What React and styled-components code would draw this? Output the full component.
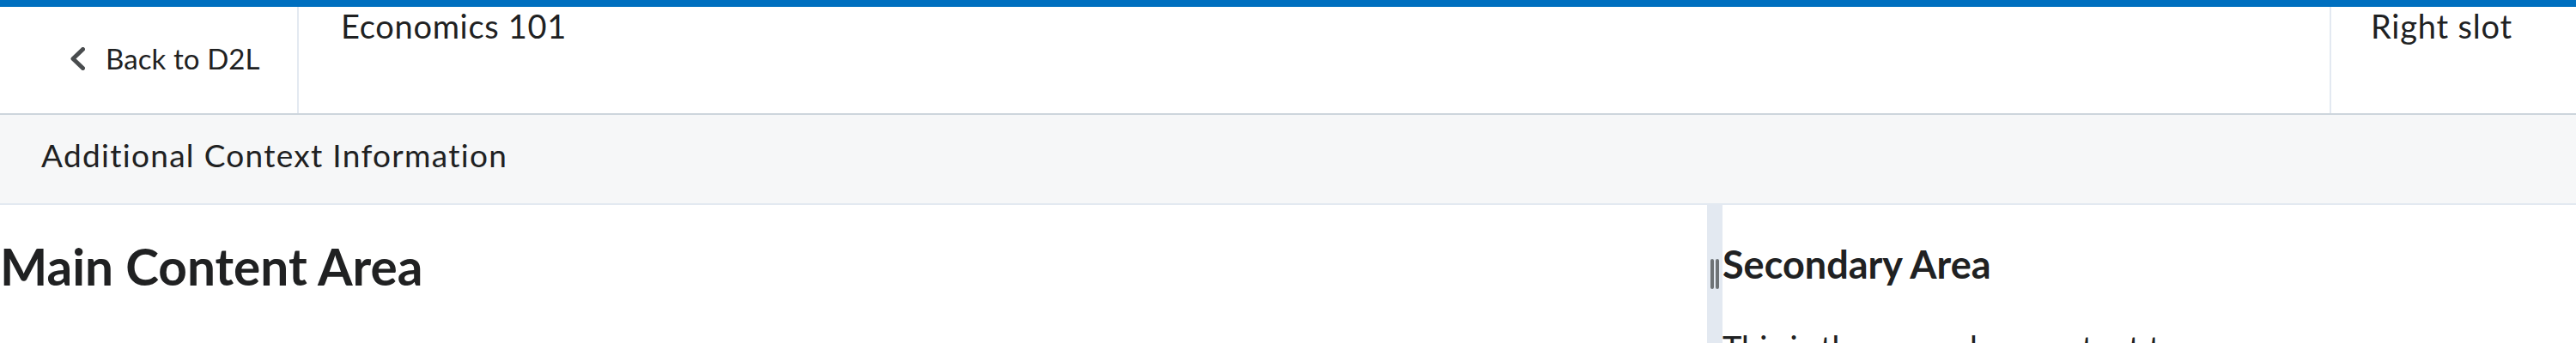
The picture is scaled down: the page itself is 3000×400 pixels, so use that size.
import React from "react";
import styled, { createGlobalStyle } from "styled-components";

export default function App() {
  return (
    <>
      <GlobalStyle />
      <Page>
        <Header>
          <BackSlot>
            <Chevron viewBox="0 0 17 27" aria-hidden="true">
              <path d="M14.5 2.5 L3 13.5 L14.5 24.5" />
            </Chevron>
            <BackText>Back to D2L</BackText>
          </BackSlot>
          <MiddleSlot>Economics 101</MiddleSlot>
          <RightSlot>Right slot</RightSlot>
        </Header>

        <ContextBar>Additional Context Information</ContextBar>

        <Body>
          <Primary>
            <MainTitle>Main Content Area</MainTitle>
          </Primary>
          <Divider>
            <Handle>
              <HandleBar />
              <HandleBar />
            </Handle>
          </Divider>
          <Secondary>
            <SecondaryTitle>Secondary Area</SecondaryTitle>
            <SecondaryText>
              This is the secondary content to demonstrate the primary and secondary layout.
            </SecondaryText>
          </Secondary>
        </Body>
      </Page>
    </>
  );
}

const GlobalStyle = createGlobalStyle`
  *, *::before, *::after {
    box-sizing: border-box;
  }
  body {
    margin: 0;
    background: #ffffff;
    font-family: Lato, "Noto Sans", sans-serif;
    font-variant-ligatures: none;
    color: #202122;
    overflow: hidden;
  }
`;

const Page = styled.div`
  width: 3000px;
`;

//-----------상단 네비게이션-------------
const Header = styled.header`
  display: flex;
  height: 134px;
  border-top: 8px solid #006fbf;
  border-bottom: 2px solid #cdd5dc;
`;

const BackSlot = styled.a`
  display: flex;
  align-items: center;
  gap: 24px;
  width: 348px;
  padding: 0 0 4px 82px;
  border-right: 2px solid #e3e9f1;
  color: #202122;
  text-decoration: none;
`;

const Chevron = styled.svg`
  width: 17px;
  height: 27px;
  flex-shrink: 0;
  fill: none;
  stroke: #494c4e;
  stroke-width: 5;
  stroke-linecap: round;
  stroke-linejoin: round;
`;

const BackText = styled.span`
  font-size: 33px;
  letter-spacing: 0.1px;
  white-space: nowrap;
`;

const MiddleSlot = styled.div`
  flex: 1;
  padding-left: 49px;
  font-size: 38px;
  letter-spacing: 0.7px;
  line-height: 1.2;
`;

const RightSlot = styled.div`
  width: 287px;
  padding-left: 46px;
  border-left: 2px solid #e3e9f1;
  font-size: 38px;
  letter-spacing: 0.8px;
  line-height: 1.2;
`;

//-----------컨텍스트 바-------------
const ContextBar = styled.div`
  height: 105px;
  padding: 25px 48px 0;
  background: #f6f7f8;
  border-bottom: 2px solid #e3e9f1;
  font-size: 37px;
  letter-spacing: 1.3px;
  line-height: 1.2;
`;

//-----------본문 영역-------------
const Body = styled.main`
  display: flex;
  height: 161px;
`;

const Primary = styled.section`
  width: 1988px;
`;

const MainTitle = styled.h1`
  margin: 36px 0 0;
  font-size: 58.5px;
  font-weight: 700;
  line-height: 1.2;
`;

const Divider = styled.div`
  display: flex;
  justify-content: center;
  align-items: flex-start;
  width: 18px;
  padding-top: 63px;
  background: #e3e9f1;
`;

const Handle = styled.div`
  display: flex;
  gap: 2px;
`;

const HandleBar = styled.span`
  width: 4px;
  height: 35px;
  border-radius: 2px;
  background: #6e7376;
`;

const Secondary = styled.aside`
  flex: 1;
`;

const SecondaryTitle = styled.h2`
  margin: 42px 0 0;
  font-size: 45px;
  font-weight: 700;
  line-height: 1.2;
`;

const SecondaryText = styled.p`
  max-width: 540px;
  margin: 48px 0 0;
  font-size: 38px;
  line-height: 1.2;
`;
